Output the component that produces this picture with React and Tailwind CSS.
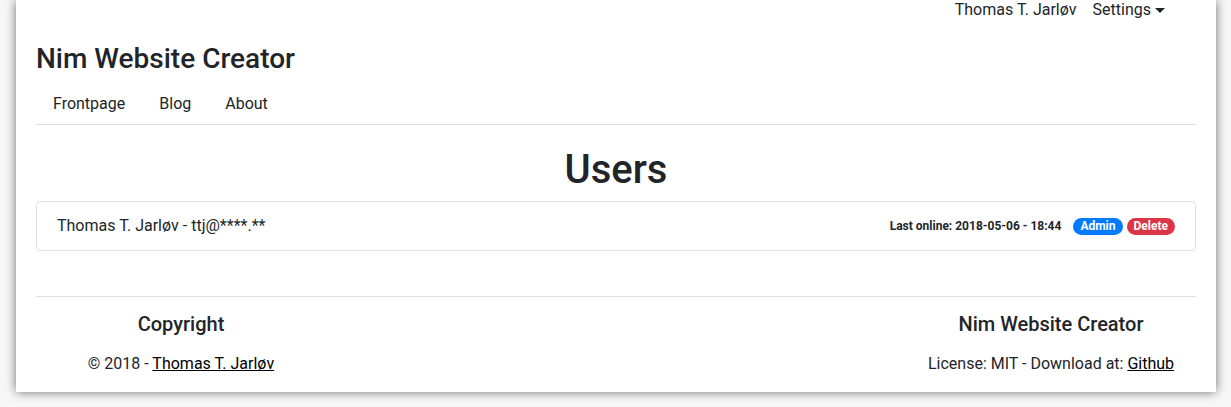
export default function App() {
  return (
    <div className="min-h-[407px] bg-[#f7f7f7] text-[#212529]" style={{ fontFamily: "Roboto, 'Noto Sans', sans-serif" }}>
      <div className="mx-[16px] w-[1200px] h-[392px] bg-white shadow-[0_0_10px_rgba(0,0,0,0.55)] px-[20px] flex flex-col">
        <div className="flex justify-end pt-[1px] h-[19px] leading-[18px] text-[16px] pr-[31px]">
          <span className="mr-[16px]">Thomas T. Jarløv</span>
          <span className="flex items-center">
            Settings
            <span className="ml-[4px] mt-[1px] w-0 h-0 border-l-[5px] border-r-[5px] border-t-[5px] border-l-transparent border-r-transparent border-t-[#212529]"></span>
          </span>
        </div>
        <div className="mt-[23px] text-[28px] leading-[34px] font-medium">Nim Website Creator</div>
        <div className="flex mt-[16px] text-[16px] leading-[24px]">
          <span className="px-[17px]">Frontpage</span>
          <span className="px-[17px]">Blog</span>
          <span className="px-[17px]">About</span>
        </div>
        <div className="mt-[8px] border-t border-[#dee2e6]"></div>
        <div className="mt-[21px] text-center text-[40px] leading-[48px] font-medium">Users</div>
        <div className="mt-[7px] h-[50px] border border-[#dfdfdf] rounded-[4px] flex items-center justify-between pl-[20px] pr-[20px]">
          <span className="text-[16px]">Thomas T. Jarløv - ttj@****.**</span>
          <div className="flex items-center">
            <span className="text-[12px] font-bold mr-[12px]">Last online: 2018-05-06 - 18:44</span>
            <span className="bg-[#007bff] text-white text-[12px] font-bold rounded-full px-[7px] h-[17px] leading-[17px] mr-[4px]">Admin</span>
            <span className="bg-[#dc3545] text-white text-[12px] font-bold rounded-full px-[7px] h-[17px] leading-[17px]">Delete</span>
          </div>
        </div>
        <div className="mt-[45px] border-t border-[#dee2e6]"></div>
        <div className="flex justify-between">
          <div className="w-[290px] text-center">
            <div className="mt-[15px] text-[20px] leading-[24px] font-medium">Copyright</div>
            <div className="mt-[16px] text-[16px] leading-[24px]">© 2018 - <a className="underline text-black">Thomas T. Jarløv</a></div>
          </div>
          <div className="w-[290px] text-center">
            <div className="mt-[15px] text-[20px] leading-[24px] font-medium">Nim Website Creator</div>
            <div className="mt-[16px] text-[16px] leading-[24px]">License: MIT - Download at: <a className="underline text-black">Github</a></div>
          </div>
        </div>
      </div>
    </div>
  );
}
